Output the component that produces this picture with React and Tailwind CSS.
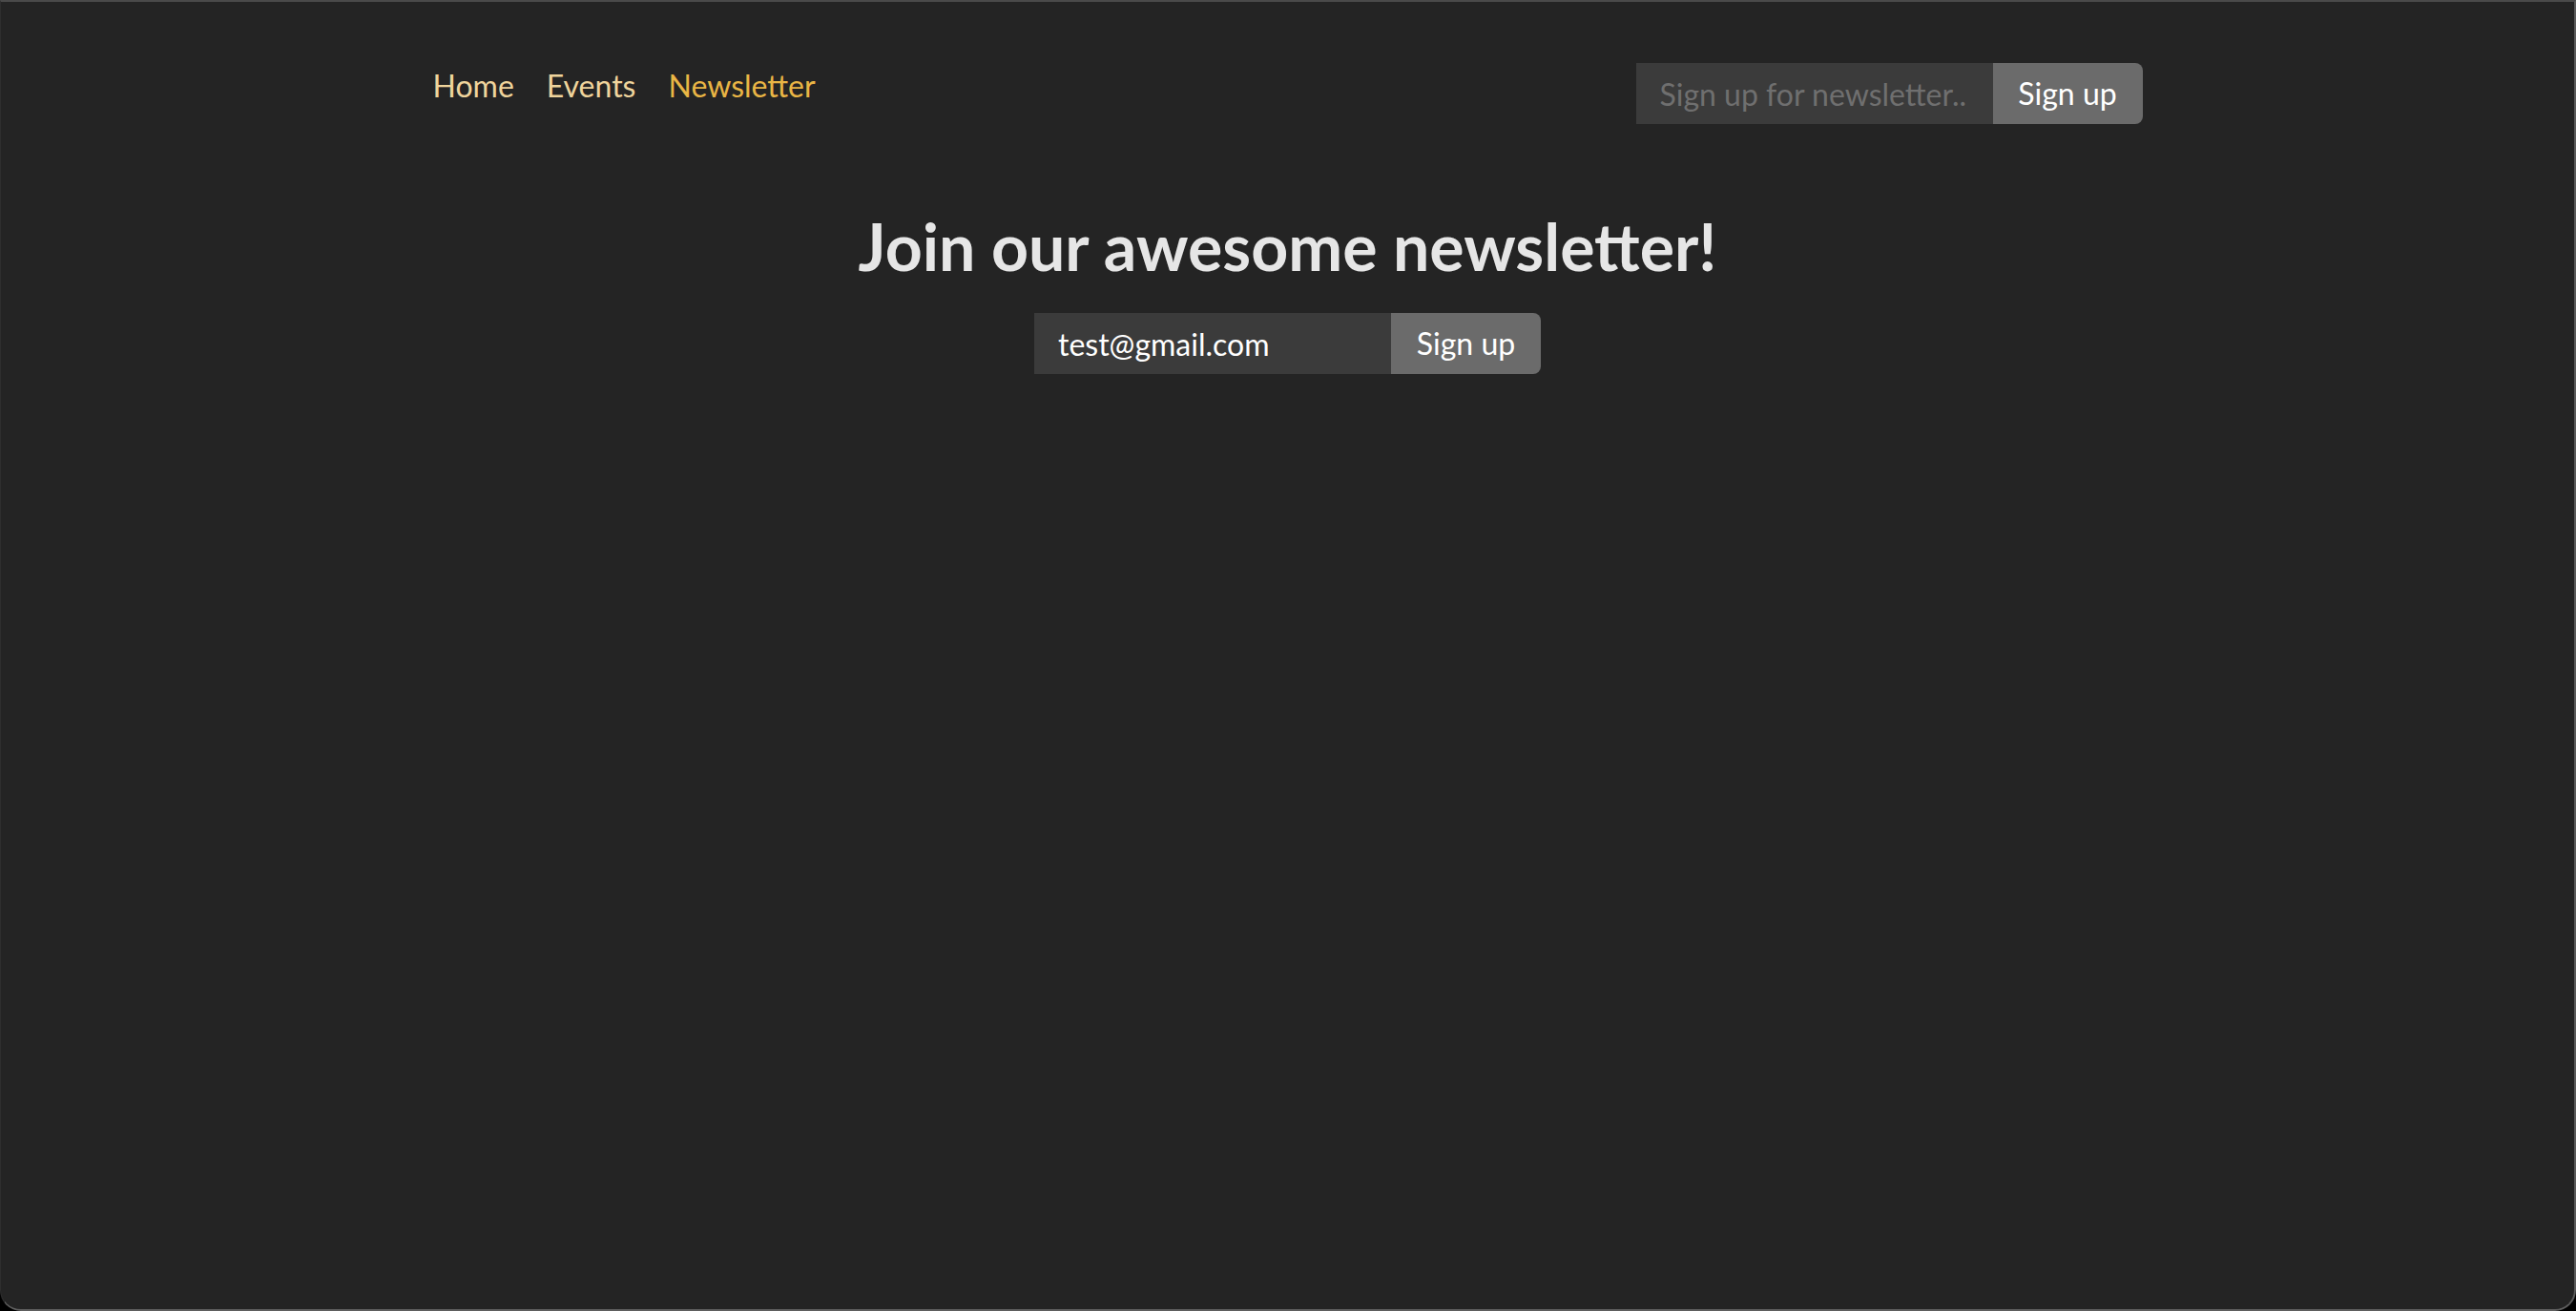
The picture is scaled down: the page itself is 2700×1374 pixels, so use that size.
export default function App() {
  const font = { fontFamily: '"Lato", "Noto Sans", sans-serif' };
  return (
    <div className="w-[2700px] h-[1374px] bg-black" style={font}>
      <div className="w-full h-full bg-[#242424] border-t-2 border-r-2 border-b-2 border-l border-t-[#4a4a4a] border-r-[#5a5a5a] border-b-[#5e5e5e] border-l-[#2e2e2e] rounded-b-[22px] overflow-hidden">
        <div className="w-[1792px] mx-auto pt-[64px] flex justify-between items-start">
          <nav className="flex gap-[34px] text-[32px] leading-[48px]">
            <a className="text-[#efd49c]">Home</a>
            <a className="text-[#efd49c]">Events</a>
            <a className="text-[#e9b545]">Newsletter</a>
          </nav>
          <form className="flex h-[64px] text-[32px]" onSubmit={(e) => e.preventDefault()}>
            <input
              className="w-[374px] h-full bg-[#3b3b3b] px-[25px] text-white placeholder:text-[#6f6f6f] outline-none"
              placeholder="Sign up for newsletter.."
            />
            <button className="w-[157px] h-full bg-[#6b6b6b] text-white rounded-r-[8px]">Sign up</button>
          </form>
        </div>
        <div className="flex flex-col items-center mt-[88px]">
          <h1 className="text-[68px] leading-[80px] font-bold text-[#e6e6e6]">Join our awesome newsletter!</h1>
          <form className="flex h-[64px] text-[32px] mt-[30px]" onSubmit={(e) => e.preventDefault()}>
            <input
              className="w-[374px] h-full bg-[#3b3b3b] px-[25px] text-white placeholder:text-[#6f6f6f] outline-none"
              defaultValue="test@gmail.com"
            />
            <button className="w-[157px] h-full bg-[#6b6b6b] text-white rounded-r-[8px]">Sign up</button>
          </form>
        </div>
      </div>
    </div>
  );
}
